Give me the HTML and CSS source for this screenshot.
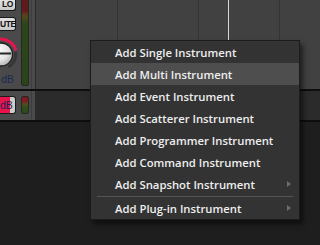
FILE: index.html
```html
<!DOCTYPE html>
<html>
<head>
<meta charset="utf-8">
<link rel="stylesheet" href="styles.css">
</head>
<body>
<div class="app">
  <div class="track t1">
    <div class="panel">
      <div class="ctrls">
        <div class="btn b-solo">LO</div>
        <div class="btn b-mute">UTE</div>
        <svg class="knob" width="18" height="36" viewBox="0 36 18 36">
          <defs>
            <radialGradient id="kg" cx="0.35" cy="0.3" r="0.8">
              <stop offset="0" stop-color="#ffffff"/>
              <stop offset="0.6" stop-color="#e2e2e2"/>
              <stop offset="1" stop-color="#a8a8a8"/>
            </radialGradient>
          </defs>
          <path d="M15.5 53.5 A14.5 14.5 0 0 1 8.5 69" fill="none" stroke="#363636" stroke-width="3"/>
          <circle cx="1" cy="56.5" r="11.5" fill="url(#kg)" stroke="#1c1c1c" stroke-width="1.3"/>
          <line x1="0" y1="55.5" x2="11" y2="55.5" stroke="#262626" stroke-width="2"/>
          <path d="M-0.35 41.06 A15.5 15.5 0 0 1 15.97 52.49" fill="none" stroke="#e3164f" stroke-width="3"/>
        </svg>
        <div class="vol">dB</div>
      </div>
      <div class="meter big"></div>
      <div class="divider"></div>
    </div>
    <div class="lane">
      <div class="bar"></div>
      <div class="bar"></div>
      <div class="bar"></div>
      <div class="bar"></div>
      <div class="playhead"></div>
    </div>
  </div>
  <div class="track t2">
    <div class="panel">
      <div class="ctrls">
        <div class="pbtn">dB</div>
      </div>
      <div class="meter small"></div>
      <div class="divider"></div>
    </div>
    <div class="lane"></div>
  </div>

  <div class="menu">
    <div class="item">Add Single Instrument</div>
    <div class="item active">Add Multi Instrument</div>
    <div class="item">Add Event Instrument</div>
    <div class="item">Add Scatterer Instrument</div>
    <div class="item">Add Programmer Instrument</div>
    <div class="item">Add Command Instrument</div>
    <div class="item">Add Snapshot Instrument<span class="arrow"></span></div>
    <div class="sep"></div>
    <div class="item">Add Plug-in Instrument<span class="arrow"></span></div>
  </div>
</div>
</body>
</html>
```
FILE: styles.css
```css
html, body {
  margin: 0;
  padding: 0;
}
body {
  background: #1e1e1e;
  font-family: "Open Sans", "DejaVu Sans", sans-serif;
}
.app {
  position: relative;
  width: 320px;
  height: 245px;
  overflow: hidden;
  background: #1e1e1e;
}
.track {
  display: flex;
  border-bottom: 2px solid #0e0e0e;
}
.t1 { height: 89px; }
.t2 { height: 29px; }
.panel {
  width: 35px;
  flex-shrink: 0;
  display: flex;
  align-items: flex-start;
  background: #4a4a4a;
  border-right: 1px solid #2c2c2c;
  overflow: hidden;
}
.ctrls {
  width: 16px;
  flex-shrink: 0;
  display: flex;
  flex-direction: column;
}
.btn {
  box-sizing: border-box;
  background: linear-gradient(#e2e2e2, #c8c8c8);
  border: 1px solid #1a1a1a;
  border-left: none;
  border-radius: 0 3px 3px 0;
  color: #111;
  font-family: "Liberation Sans", sans-serif;
  font-weight: bold;
  font-size: 8.5px;
  letter-spacing: -0.4px;
  text-align: right;
  padding-right: 2px;
  white-space: nowrap;
}
.b-solo {
  height: 11px;
  border-top: none;
  border-radius: 0 0 3px 0;
  line-height: 9px;
}
.b-mute {
  margin-top: 6px;
  height: 14px;
  line-height: 12px;
}
.knob {
  display: block;
  overflow: visible;
  margin-top: 3px;
}
.vol {
  margin-top: 3px;
  height: 12px;
  line-height: 12px;
  font-family: "Liberation Sans", sans-serif;
  font-size: 10.5px;
  color: #1b2a52;
  text-align: right;
  padding-right: 2px;
}
.pbtn {
  box-sizing: border-box;
  margin-top: 5px;
  height: 18px;
  line-height: 16px;
  background: linear-gradient(to right, #e9134c 0 10px, #cdcdcd 10px);
  border: 1px solid #1c1c1c;
  border-left: none;
  border-radius: 0 3px 3px 0;
  font-family: "Liberation Sans", sans-serif;
  font-size: 10.5px;
  color: #1a2456;
  text-align: right;
  padding-right: 4px;
}
.meter {
  box-sizing: border-box;
  width: 8px;
  margin-left: 5px;
  flex-shrink: 0;
  border: 1px solid #262626;
  border-radius: 2px;
}
.meter.big {
  margin-top: -2px;
  height: 88px;
  background: linear-gradient(#5e1a1c 0, #5e1a1c 12px, #5c3a1a 15px, #4a4a1a 19px, #2c4519 24px, #2a4318 100%);
}
.meter.small {
  margin-top: 5px;
  height: 18px;
  background: linear-gradient(#7a1c24 0, #7a1c24 4px, #5a4a1c 7px, #2e4f1d 10px, #2b4a1b 100%);
}
.divider {
  width: 1px;
  align-self: stretch;
  margin-left: 2px;
  background: #3d3d3d;
  flex-shrink: 0;
}
.lane {
  flex: 1;
  display: flex;
  position: relative;
  padding-left: 1px;
  background: #414141;
  overflow: hidden;
}
.t2 .lane {
  background: #2b2b2b;
}
.bar {
  width: 80px;
  flex-shrink: 0;
  border-right: 1px solid #343434;
}
.playhead {
  position: absolute;
  left: 192px;
  top: 0;
  bottom: 0;
  width: 1px;
  background: #d8d8d8;
}
.menu {
  position: absolute;
  left: 90px;
  top: 40px;
  width: 210px;
  box-sizing: border-box;
  background: #333333;
  border: 1px solid #1c1c1c;
  box-shadow: 3px 4px 5px rgba(0, 0, 0, 0.55);
}
.item {
  height: 22px;
  display: flex;
  align-items: center;
  justify-content: space-between;
  padding: 0 8px 0 24px;
  color: #eeeeee;
  font-size: 11.3px;
  font-weight: 600;
  white-space: nowrap;
}
.item.active {
  background: #4e4e4e;
}
.sep {
  height: 1px;
  margin: 1px 6px 0;
  background: #545454;
}
.arrow {
  width: 0;
  height: 0;
  border-left: 4px solid #6c6c6c;
  border-top: 3.5px solid transparent;
  border-bottom: 3.5px solid transparent;
}
```
